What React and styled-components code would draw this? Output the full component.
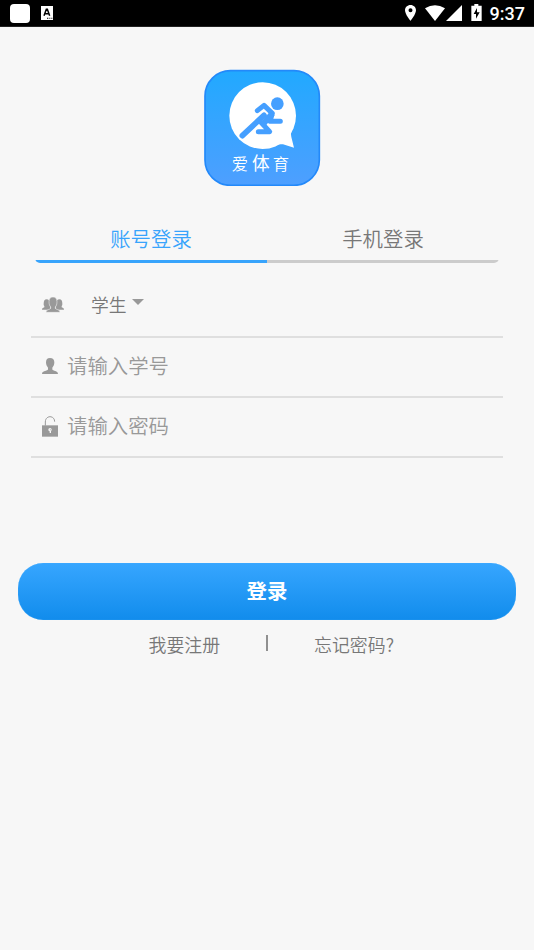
import React from 'react';
import styled, { createGlobalStyle } from 'styled-components';

const colors = {
	page: '#f7f7f7',
	blue: '#38a4fc',
	text: '#777',
	muted: '#999',
	line: '#dfdfdf',
};

export default function App() {
	return (
		<>
			<GlobalStyle />
			<Screen>
				<StatusBar>
					<AppSquare />
					<LanguageIcon />
					<StatusRight>
						<PinIcon />
						<WifiIcon />
						<SignalIcon />
						<BatteryIcon />
						<Clock>9:37</Clock>
					</StatusRight>
				</StatusBar>
				<Logo />
				<Tabs>
					<Tab $active>账号登录</Tab>
					<Tab>手机登录</Tab>
				</Tabs>
				<Form>
					<Row $role>
						<GroupIcon />
						<Role>学生</Role>
						<Caret />
					</Row>
					<Row>
						<UserIcon />
						<Input placeholder="请输入学号" />
					</Row>
					<Row>
						<LockIcon />
						<Input placeholder="请输入密码" />
					</Row>
				</Form>
				<LoginButton>登录</LoginButton>
				<Links>
					<Link>我要注册</Link>
					<Divider />
					<Link>忘记密码?</Link>
				</Links>
			</Screen>
		</>
	);
}

function LanguageIcon() {
	return (
		<svg width="12" height="14" viewBox="0 0 36 42">
			<path fill="#fff" d="M0 0h36v42H0z" />
			<path
				fill="none"
				stroke="#000"
				strokeWidth="4.5"
				d="M9 29L16 10h3l7 19M12 23h11"
			/>
			<path fill="#000" d="M18 35h4v3h-4zM25 35h3v3h-3zM31 35h3v3h-3z" />
		</svg>
	);
}

function PinIcon() {
	return (
		<svg width="11" height="16" viewBox="0 0 33 48">
			<path
				fill="#fff"
				fillRule="evenodd"
				d="M16.5 0C7 0 0 7 0 16c0 12 16.5 32 16.5 32S33 28 33 16C33 7 26 0 16.5 0zm0 10a6 6 0 110 12 6 6 0 010-12z"
			/>
		</svg>
	);
}

function WifiIcon() {
	return (
		<svg width="20" height="16" viewBox="0 0 60 48">
			<path fill="#fff" d="M0 10Q30-9 60 10L30 48z" />
		</svg>
	);
}

function SignalIcon() {
	return (
		<svg width="16" height="16" viewBox="0 0 48 48">
			<path fill="#fff" d="M48 0v48H0z" />
		</svg>
	);
}

function BatteryIcon() {
	return (
		<svg width="11" height="17" viewBox="0 0 33 51">
			<path fill="#fff" d="M10 0h12v5h10v46H1V5h9z" />
			<path fill="#000" d="M18 12L8 30h7v14l11-19h-8z" />
		</svg>
	);
}

function Logo() {
	return (
		<LogoSvg viewBox="21 21 351 351">
			<defs>
				<linearGradient id="logoFill" x1="0" y1="0" x2="0" y2="1">
					<stop offset="0" stopColor="#21a9ff" />
					<stop offset="1" stopColor="#4e9fff" />
				</linearGradient>
			</defs>
			<rect
				x="24"
				y="26"
				width="343"
				height="344"
				rx="76"
				fill="url(#logoFill)"
				stroke="#2389fa"
				strokeWidth="5"
			/>
			<circle cx="197" cy="161" r="100" fill="#fff" />
			<path fill="#fff" d="M284 206Q280 216 283 225L291 257 258 247Q246 245 236 250L220 230z" />
			<circle cx="241" cy="125" r="19" fill="#459fff" />
			<g
				fill="none"
				stroke="#459fff"
				strokeWidth="15"
				strokeLinecap="round"
				strokeLinejoin="round"
			>
				<path d="M181 146L201 130 226 154 219 178H250" />
				<path d="M226 154L197 188" strokeWidth="18" strokeLinecap="butt" />
				<path d="M136 221L201 160" strokeWidth="17" />
				<path d="M191 180L218 209H184" />
			</g>
			<LogoText x="104" y="323">
				爱
			</LogoText>
			<LogoText x="165" y="324" $wide>
				体
			</LogoText>
			<LogoText x="227" y="323">
				育
			</LogoText>
		</LogoSvg>
	);
}

function GroupIcon() {
	return (
		<svg width="22" height="16" viewBox="0 0 66 48">
			<g fill={colors.muted}>
				<path d="M5 20c0-9 3-13 9-13s8 3 8 11l3 15-3 5H0c0-4 2-5 7-7v-4c-2-2-2-4-2-7z" />
				<path d="M61 20c0-9-3-13-9-13s-8 3-8 11l-3 15 3 5h22c0-4-2-5-7-7v-4c2-2 2-4 2-7z" />
				<path
					stroke={colors.page}
					strokeWidth="1.5"
					d="M21 14c0-10 5-14 12-14s12 4 12 14c0 8-2 12-5 16v4c1 4 14 3 14 12H12c0-9 13-8 14-12v-4c-3-4-5-8-5-16z"
				/>
			</g>
		</svg>
	);
}

function UserIcon() {
	return (
		<svg width="16" height="16" viewBox="0 0 48 48">
			<path
				fill={colors.muted}
				d="M12 13C12 4 16 0 24 0s13 4 13 13c0 8-3 12-6 16v5c1 6 17 4 17 14H0c0-10 17-8 18-14v-5c-3-4-6-8-6-16z"
			/>
		</svg>
	);
}

function LockIcon() {
	return (
		<svg width="16" height="21" viewBox="0 0 48 63">
			<path
				fill="none"
				stroke={colors.muted}
				strokeWidth="3"
				d="M10 29V18C10-3 38-3 38 17"
			/>
			<path fill={colors.muted} d="M0 28h48v34H0z" />
			<circle cx="24" cy="41" r="5" fill={colors.page} />
			<path fill={colors.page} d="M23 44h4v7h-4z" />
			<circle cx="25" cy="41" r="1.5" fill={colors.muted} />
		</svg>
	);
}

const GlobalStyle = createGlobalStyle`
	* {
		box-sizing: border-box;
	}
	body {
		margin: 0;
		background: ${colors.page};
		font-family: 'Noto Sans CJK SC', sans-serif;
		font-weight: 350;
	}
	svg {
		display: block;
		flex-shrink: 0;
	}
`;

const Screen = styled.div`
	height: 950px;
	display: flex;
	flex-direction: column;
	background: ${colors.page};
	overflow: hidden;
`;

const StatusBar = styled.div`
	height: 27px;
	flex-shrink: 0;
	display: flex;
	align-items: center;
	padding: 0 9px 0 10px;
	background: #000;
	border-bottom: 1px solid #222;
`;

const AppSquare = styled.div`
	width: 20px;
	height: 19px;
	margin-right: 11px;
	border-radius: 4px;
	background: #fff;
`;

const StatusRight = styled.div`
	display: flex;
	align-items: center;
	margin-left: auto;

	svg:nth-child(2) {
		margin-left: 8.5px;
	}
	svg:nth-child(3) {
		margin-left: 1px;
	}
	svg:nth-child(4) {
		margin: 0 8px 1px 9px;
	}
`;

const Clock = styled.span`
	padding-top: 1px;
	font: 500 18px/26px Roboto, sans-serif;
	color: #fff;
`;

const LogoSvg = styled.svg`
	width: 117px;
	height: 117px;
	margin: 42px 0 0 204px;
`;

const LogoText = styled.text`
	font-family: 'Noto Sans CJK SC', sans-serif;
	font-size: ${props => (props.$wide ? '53px' : '49px')};
	font-weight: ${props => (props.$wide ? 400 : 350)};
	fill: #fff;
`;

const Tabs = styled.div`
	display: flex;
	height: 43px;
	flex-shrink: 0;
	margin: 34px 35px 0;
	border-radius: 0 0 5px 5px;
	overflow: hidden;
`;

const Tab = styled.div`
	flex: 1;
	padding-top: 2px;
	text-align: center;
	font-size: 20.4px;
	line-height: 32px;
	color: ${props => (props.$active ? colors.blue : colors.text)};
	border-bottom: 3px solid ${props => (props.$active ? colors.blue : '#ccc')};
`;

const Form = styled.div`
	margin: 0 31px;
	padding-top: 14px;
`;

const Row = styled.div`
	display: flex;
	align-items: center;
	height: ${props => (props.$role ? '61px' : '60px')};
	padding: ${props => (props.$role ? '0 0 4px 11px' : '0 0 2px 11px')};
	border-bottom: 2px solid ${colors.line};
`;

const Role = styled.span`
	margin: 0 0 1px 27px;
	font-size: 17.8px;
	color: ${colors.text};
`;

const Caret = styled.span`
	margin: 0 0 5px 5px;
	border: 6px solid transparent;
	border-top-color: ${colors.muted};
	border-bottom: 0;
`;

const Input = styled.input`
	flex: 1;
	padding: 0;
	margin: 0 0 3px 9px;
	border: 0;
	outline: 0;
	background: none;
	font: 350 20.4px/32px 'Noto Sans CJK SC', sans-serif;

	&::placeholder {
		color: ${colors.muted};
		opacity: 1;
	}
`;

const LoginButton = styled.button`
	height: 57px;
	flex-shrink: 0;
	margin: 105px 18px 0;
	padding: 0 0 3px;
	border: 0;
	border-radius: 25px;
	background: linear-gradient(#37a6ff, #118cec);
	box-shadow: inset 0 0 1px #62b8ff;
	color: #fff;
	font: bold 20.4px/30px 'Noto Sans CJK SC', sans-serif;
`;

const Links = styled.div`
	display: flex;
	align-items: flex-start;
	padding: 10px 0 0 148.5px;
`;

const Link = styled.span`
	font-size: 17.9px;
	line-height: 28px;
	color: ${colors.text};
`;

const Divider = styled.span`
	width: 2px;
	height: 16px;
	margin: 5px 46.5px 0 45.5px;
	background: #909090;
`;
